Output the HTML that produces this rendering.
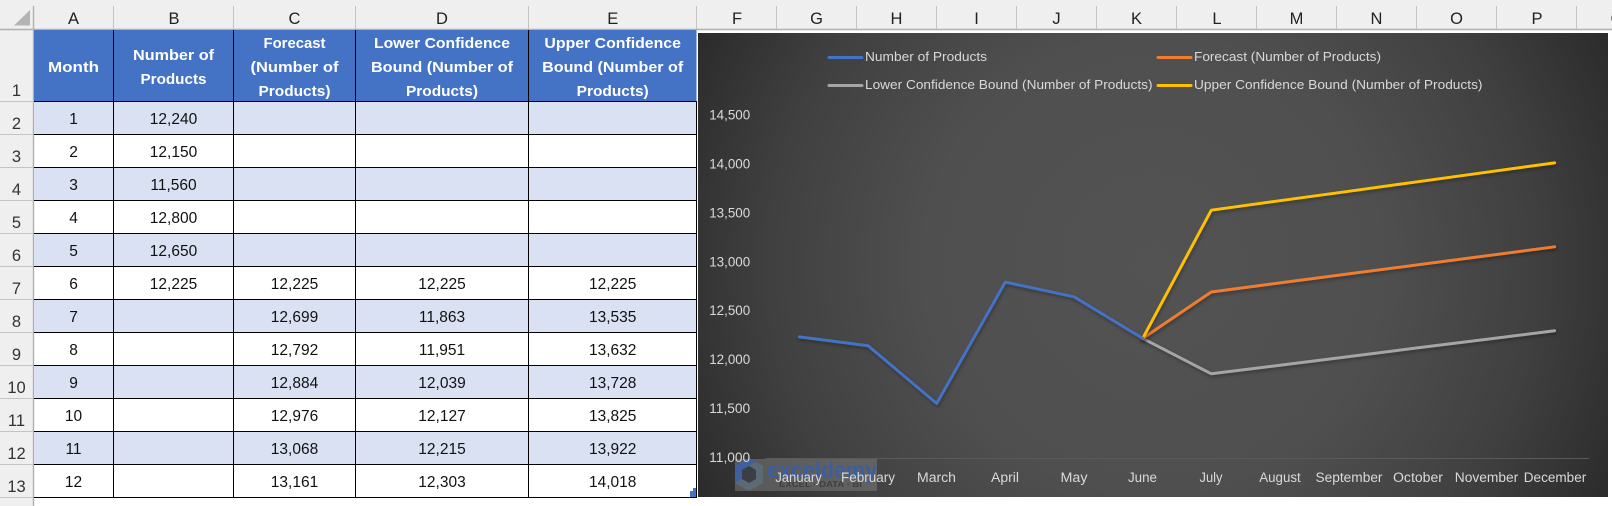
<!DOCTYPE html>
<html><head><meta charset="utf-8"><style>
html,body{margin:0;padding:0;background:#fff;width:1612px;height:506px;overflow:hidden}
svg{display:block}
text{font-family:"Liberation Sans",sans-serif;text-anchor:middle}
.h{font-size:15px;font-weight:bold;fill:#fff}
.d{font-size:15.5px;fill:#111}
.c{font-size:16.5px;fill:#222}
.r{font-size:16.5px;fill:#333}
.k{font-size:13px;fill:#d9d9d9;text-anchor:start}
.y{font-size:13.5px;fill:#d9d9d9}
.m{font-size:13.5px;fill:#d9d9d9}
.g{stroke:#000;stroke-width:1;fill:none}
.s{stroke:#c4c4c4;stroke-width:1;fill:none}
.l{fill:none;stroke-width:3;stroke-linejoin:round;stroke-linecap:round;filter:drop-shadow(1px 2px 1.5px rgba(0,0,0,.3))}
</style></head><body>
<svg width="1612" height="506" viewBox="0 0 1612 506" xmlns="http://www.w3.org/2000/svg">
<defs><radialGradient id="bg" gradientUnits="userSpaceOnUse" cx="1153" cy="265" r="510">
<stop offset="0" stop-color="#535353"/><stop offset=".45" stop-color="#4f4f4f"/><stop offset=".75" stop-color="#404040"/><stop offset="1" stop-color="#2b2b2b"/></radialGradient></defs>
<rect width="1612" height="506" fill="#fff"/>
<!-- headers -->
<rect width="1612" height="29" fill="#efefef"/>
<rect y="0" width="33" height="506" fill="#efefef"/>
<polygon points="14,25.5 30,10 30,25.5" fill="#b4b4b4"/>
<path d="M0 29.5H1612M33.5 6V506" stroke="#b0b0b0" stroke-width="1.4" fill="none"/>
<path class="s" d="M113.5 6V29M233.5 6V29M355.5 6V29M528.5 6V29M696.5 6V29M776.5 6V29M856.5 6V29M936.5 6V29M1016.5 6V29M1096.5 6V29M1176.5 6V29M1256.5 6V29M1336.5 6V29M1416.5 6V29M1496.5 6V29M1576.5 6V29" stroke="#b8b8b8"/>
<path class="s" d="M0 101.5H33M0 134.5H33M0 167.5H33M0 200.5H33M0 233.5H33M0 266.5H33M0 299.5H33M0 332.5H33M0 365.5H33M0 398.5H33M0 431.5H33M0 464.5H33M0 497.5H33"/>
<g class="c">
<text x="73.5" y="24">A</text><text x="174" y="24">B</text><text x="294.5" y="24">C</text><text x="442" y="24">D</text><text x="612.7" y="24">E</text>
<text x="737" y="24">F</text><text x="816.5" y="24">G</text><text x="896.5" y="24">H</text><text x="976.5" y="24">I</text><text x="1056.5" y="24">J</text><text x="1136.5" y="24">K</text><text x="1217" y="24">L</text><text x="1296.5" y="24">M</text><text x="1376.5" y="24">N</text><text x="1456.5" y="24">O</text><text x="1537" y="24">P</text><text x="1617" y="24">Q</text>
</g>
<g class="r">
<text x="16.5" y="96">1</text><text x="16.5" y="129">2</text><text x="16.5" y="162">3</text><text x="16.5" y="195">4</text><text x="16.5" y="228">5</text><text x="16.5" y="261">6</text><text x="16.5" y="294">7</text><text x="16.5" y="327">8</text><text x="16.5" y="360">9</text><text x="16.5" y="393">10</text><text x="16.5" y="426">11</text><text x="16.5" y="459">12</text><text x="16.5" y="492">13</text>
</g>
<!-- table fills -->
<rect x="34" y="30" width="662.5" height="71.5" fill="#4472c4"/>
<g fill="#d9e1f2">
<rect x="34" y="102" width="662.5" height="32.5"/><rect x="34" y="168" width="662.5" height="32.5"/><rect x="34" y="234" width="662.5" height="32.5"/><rect x="34" y="300" width="662.5" height="32.5"/><rect x="34" y="366" width="662.5" height="32.5"/><rect x="34" y="432" width="662.5" height="32.5"/>
</g>
<path class="g" d="M34 101.5H697M34 134.5H697M34 167.5H697M34 200.5H697M34 233.5H697M34 266.5H697M34 299.5H697M34 332.5H697M34 365.5H697M34 398.5H697M34 431.5H697M34 464.5H697M34 497.5H697M113.5 30V498M233.5 30V498M355.5 30V498M528.5 30V498M696.5 102V498"/>
<rect x="690" y="491" width="6" height="6" fill="#4472c4"/><rect x="693" y="488" width="3" height="3" fill="#4472c4"/>
<!-- header text -->
<g class="h">
<text x="73.5" y="72" textLength="51" lengthAdjust="spacingAndGlyphs">Month</text>
<text x="173.5" y="60" textLength="81" lengthAdjust="spacingAndGlyphs">Number of</text>
<text x="173.5" y="84" textLength="66" lengthAdjust="spacingAndGlyphs">Products</text>
<text x="294.5" y="48" textLength="62" lengthAdjust="spacingAndGlyphs">Forecast</text>
<text x="294.5" y="72" textLength="88" lengthAdjust="spacingAndGlyphs">(Number of</text>
<text x="294.5" y="96" textLength="72" lengthAdjust="spacingAndGlyphs">Products)</text>
<text x="442" y="48" textLength="136" lengthAdjust="spacingAndGlyphs">Lower Confidence</text>
<text x="442" y="72" textLength="142" lengthAdjust="spacingAndGlyphs">Bound (Number of</text>
<text x="442" y="96" textLength="72" lengthAdjust="spacingAndGlyphs">Products)</text>
<text x="612.7" y="48" textLength="136.5" lengthAdjust="spacingAndGlyphs">Upper Confidence</text>
<text x="612.7" y="72" textLength="141" lengthAdjust="spacingAndGlyphs">Bound (Number of</text>
<text x="612.7" y="96" textLength="72" lengthAdjust="spacingAndGlyphs">Products)</text>
</g>
<!-- data -->
<g class="d">
<text x="73.5" y="124">1</text><text x="73.5" y="157">2</text><text x="73.5" y="190">3</text><text x="73.5" y="223">4</text><text x="73.5" y="256">5</text><text x="73.5" y="289">6</text><text x="73.5" y="322">7</text><text x="73.5" y="355">8</text><text x="73.5" y="388">9</text><text x="73.5" y="421">10</text><text x="73.5" y="454">11</text><text x="73.5" y="487">12</text>
<text x="173.5" y="124">12,240</text><text x="173.5" y="157">12,150</text><text x="173.5" y="190">11,560</text><text x="173.5" y="223">12,800</text><text x="173.5" y="256">12,650</text><text x="173.5" y="289">12,225</text>
<text x="294.5" y="289">12,225</text><text x="294.5" y="322">12,699</text><text x="294.5" y="355">12,792</text><text x="294.5" y="388">12,884</text><text x="294.5" y="421">12,976</text><text x="294.5" y="454">13,068</text><text x="294.5" y="487">13,161</text>
<text x="442" y="289">12,225</text><text x="442" y="322">11,863</text><text x="442" y="355">11,951</text><text x="442" y="388">12,039</text><text x="442" y="421">12,127</text><text x="442" y="454">12,215</text><text x="442" y="487">12,303</text>
<text x="612.7" y="289">12,225</text><text x="612.7" y="322">13,535</text><text x="612.7" y="355">13,632</text><text x="612.7" y="388">13,728</text><text x="612.7" y="421">13,825</text><text x="612.7" y="454">13,922</text><text x="612.7" y="487">14,018</text>
</g>
<!-- chart -->
<rect x="698" y="33" width="910" height="464" fill="url(#bg)"/>
<path d="M765 458.5H1589" stroke="#5a5a5a" stroke-width="1"/>
<!-- watermark -->
<rect x="735" y="459" width="142" height="32" fill="#808080" fill-opacity=".5"/>
<polygon points="749,458 763,466 763,483 749,491 735,483 735,466" fill="#5b6a74"/>
<polygon points="735,466 749,458 756,462 742,470 742,479 735,483" fill="#3f5f9e"/>
<polygon points="749,466 756,470 756,479 749,483 742,479 742,470" fill="#3a3f46"/>
<text x="822" y="478" style="font-size:23px;font-weight:bold;fill:#3d5e9c" textLength="110" lengthAdjust="spacingAndGlyphs">exceldemy</text>
<text x="820.5" y="487" style="font-size:8px;font-weight:bold;fill:#3f3f3f" textLength="83" lengthAdjust="spacingAndGlyphs">EXCEL · DATA · BI</text>
<!-- legend -->
<path d="M829 57.5H862" stroke="#4472c4" stroke-width="3" stroke-linecap="round"/>
<path d="M1158 57.5H1191" stroke="#ed7d31" stroke-width="3" stroke-linecap="round"/>
<path d="M829 85.5H862" stroke="#a5a5a5" stroke-width="3" stroke-linecap="round"/>
<path d="M1158 85.5H1191" stroke="#ffc000" stroke-width="3" stroke-linecap="round"/>
<text class="k" x="865" y="61" textLength="122" lengthAdjust="spacingAndGlyphs">Number of Products</text>
<text class="k" x="1194" y="61" textLength="187" lengthAdjust="spacingAndGlyphs">Forecast (Number of Products)</text>
<text class="k" x="865" y="89" textLength="287.5" lengthAdjust="spacingAndGlyphs">Lower Confidence Bound (Number of Products)</text>
<text class="k" x="1194" y="89" textLength="288.5" lengthAdjust="spacingAndGlyphs">Upper Confidence Bound (Number of Products)</text>
<!-- y axis -->
<g class="y">
<text x="729.7" y="119.5" textLength="41" lengthAdjust="spacingAndGlyphs">14,500</text>
<text x="729.7" y="168.5" textLength="41" lengthAdjust="spacingAndGlyphs">14,000</text>
<text x="729.7" y="217.5" textLength="41" lengthAdjust="spacingAndGlyphs">13,500</text>
<text x="729.7" y="266.5" textLength="41" lengthAdjust="spacingAndGlyphs">13,000</text>
<text x="729.7" y="315" textLength="41" lengthAdjust="spacingAndGlyphs">12,500</text>
<text x="729.7" y="364" textLength="41" lengthAdjust="spacingAndGlyphs">12,000</text>
<text x="729.7" y="413" textLength="41" lengthAdjust="spacingAndGlyphs">11,500</text>
<text x="729.7" y="462" textLength="41" lengthAdjust="spacingAndGlyphs">11,000</text>
</g>
<!-- x axis -->
<g class="m">
<text x="798.5" y="482" textLength="46.5" lengthAdjust="spacingAndGlyphs">January</text>
<text x="868" y="482" textLength="54" lengthAdjust="spacingAndGlyphs">February</text>
<text x="936.5" y="482" textLength="39" lengthAdjust="spacingAndGlyphs">March</text>
<text x="1005" y="482" textLength="28" lengthAdjust="spacingAndGlyphs">April</text>
<text x="1074" y="482" textLength="27" lengthAdjust="spacingAndGlyphs">May</text>
<text x="1142.5" y="482" textLength="29" lengthAdjust="spacingAndGlyphs">June</text>
<text x="1211" y="482" textLength="23" lengthAdjust="spacingAndGlyphs">July</text>
<text x="1280" y="482" textLength="41.5" lengthAdjust="spacingAndGlyphs">August</text>
<text x="1349" y="482" textLength="67" lengthAdjust="spacingAndGlyphs">September</text>
<text x="1418" y="482" textLength="50" lengthAdjust="spacingAndGlyphs">October</text>
<text x="1486.5" y="482" textLength="63.5" lengthAdjust="spacingAndGlyphs">November</text>
<text x="1555" y="482" textLength="62.5" lengthAdjust="spacingAndGlyphs">December</text>
</g>
<!-- series -->
<polyline class="l" stroke="#a5a5a5" points="1142.7,338.4 1211.3,373.8 1280,365.2 1348.7,356.6 1417.3,347.9 1486,339.4 1554.7,330.8"/>
<polyline class="l" stroke="#ed7d31" points="1142.7,338.4 1211.3,292 1280,282.9 1348.7,273.9 1417.3,264.9 1486,255.9 1554.7,246.8"/>
<polyline class="l" stroke="#ffc000" points="1142.7,338.4 1211.3,210.2 1280,200.7 1348.7,191.3 1417.3,181.8 1486,172.3 1554.7,162.9"/>
<polyline class="l" stroke="#4472c4" points="799.3,336.9 868,345.7 936.7,403.5 1005.3,282.1 1074,296.8 1142.7,338.4"/>
</svg>
</body></html>
